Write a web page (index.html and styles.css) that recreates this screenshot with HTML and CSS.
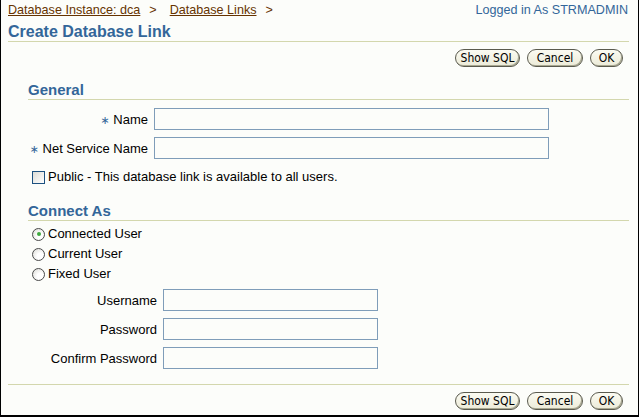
FILE: index.html
```html
<!DOCTYPE html>
<html>
<head>
<meta charset="utf-8">
<link rel="stylesheet" href="styles.css">
</head>
<body>
<div class="page">
  <div class="topbar">
    <div class="crumbs">
      <a class="crumb">Database Instance: dca</a><span class="sep">&gt;</span><a class="crumb">Database Links</a><span class="sep">&gt;</span>
    </div>
    <div class="login">Logged in As STRMADMIN</div>
  </div>
  <h1 class="title">Create Database Link</h1>
  <div class="actions">
    <button class="btn btn-sql">Show SQL</button>
    <button class="btn btn-cancel">Cancel</button>
    <button class="btn btn-ok">OK</button>
  </div>

  <div class="section">
    <h2 class="heading heading-general">General</h2>
    <div class="form form-general">
      <label class="label"><span class="req">∗</span> Name</label>
      <div class="field wide"></div>
      <label class="label"><span class="req">∗</span> Net Service Name</label>
      <div class="field wide"></div>
    </div>
    <div class="check-row">
      <span class="checkbox"></span>
      <span>Public - This database link is available to all users.</span>
    </div>

    <h2 class="heading heading-connect">Connect As</h2>
    <div class="radios">
      <div class="radio-row"><span class="radio checked"></span><span>Connected User</span></div>
      <div class="radio-row"><span class="radio"></span><span>Current User</span></div>
      <div class="radio-row"><span class="radio"></span><span>Fixed User</span></div>
    </div>
    <div class="form form-user">
      <label class="label">Username</label>
      <div class="field narrow"></div>
      <label class="label">Password</label>
      <div class="field narrow"></div>
      <label class="label">Confirm Password</label>
      <div class="field narrow"></div>
    </div>
  </div>

  <div class="footer">
    <div class="actions actions-bottom">
      <button class="btn btn-sql">Show SQL</button>
      <button class="btn btn-cancel">Cancel</button>
      <button class="btn btn-ok">OK</button>
    </div>
  </div>
</div>
</body>
</html>
```
FILE: styles.css
```css
html, body {
  margin: 0;
  padding: 0;
  background: #fcfdfa;
}
.page {
  width: 639px;
  height: 417px;
  box-sizing: border-box;
  border-left: 1px solid #000;
  border-right: 1px solid #000;
  border-bottom: 2px solid #000;
  padding: 0 9px 0 7px;
  font-family: "Liberation Sans", Arial, sans-serif;
  font-size: 13px;
  color: #000;
  background: #fcfdfa;
  overflow: hidden;
}
.topbar {
  display: flex;
  justify-content: space-between;
  padding-top: 3px;
  font-size: 12.6px;
  line-height: 15px;
  height: 15px;
}
.crumb {
  color: #663300;
  text-decoration: underline;
}
.sep {
  color: #663300;
  margin: 0 13px 0 9px;
}
.login {
  color: #336699;
  padding-right: 1px;
}
.title {
  margin: 4px 0 0 0;
  font-size: 16px;
  line-height: 19px;
  font-weight: bold;
  color: #336699;
  border-bottom: 1px solid #d3d7ad;
}
.actions {
  display: flex;
  justify-content: flex-end;
  gap: 7px;
  margin-top: 7px;
  padding-right: 6px;
}
.btn {
  height: 18px;
  box-sizing: border-box;
  border: 1px solid #5a5a4e;
  border-radius: 9px;
  background: linear-gradient(#fbfbf2, #ecebd8);
  box-shadow: inset -1px -1px 0 #a9a891;
  font-family: "DejaVu Sans Condensed", "DejaVu Sans", sans-serif;
  font-stretch: condensed;
  font-size: 12px;
  line-height: 15px;
  color: #000;
  padding: 0;
  margin: 0;
  white-space: nowrap;
  text-align: center;
}
.btn-sql { width: 65px; }
.btn-cancel { width: 56px; }
.btn-ok { width: 33px; }
.section {
  margin-left: 20px;
}
.heading {
  margin: 0;
  font-size: 15px;
  line-height: 17px;
  font-weight: bold;
  color: #336699;
  border-bottom: 1px solid #d3d7ad;
  padding-bottom: 1px;
}
.heading-general { margin-top: 14px; }
.heading-connect { margin-top: 17px; }
.form {
  display: grid;
  column-gap: 6px;
  row-gap: 7px;
  align-items: center;
}
.form-general {
  grid-template-columns: 120px 395px;
  margin-top: 8px;
}
.form-user {
  grid-template-columns: 129px 215px;
  margin-top: 5px;
}
.label {
  text-align: right;
  line-height: 16px;
  padding-top: 2px;
}
.req {
  color: #336699;
  font-family: "DejaVu Sans", sans-serif;
  font-size: 11px;
}
.field {
  height: 22px;
  box-sizing: border-box;
  border: 1px solid #7f9db9;
  background: #fcfdfa;
}
.check-row {
  display: flex;
  align-items: center;
  gap: 3px;
  margin-top: 10px;
  padding-left: 4px;
  line-height: 16px;
}
.checkbox {
  width: 13px;
  height: 13px;
  box-sizing: border-box;
  border: 1px solid #1c5180;
  background: linear-gradient(135deg, #dcdcd6, #ffffff);
}
.radios {
  margin-top: 3px;
  padding-left: 4px;
}
.radio-row {
  display: flex;
  align-items: center;
  gap: 3px;
  height: 20px;
  line-height: 20px;
}
.radio {
  width: 13px;
  height: 13px;
  box-sizing: border-box;
  border: 1px solid #4a4a4a;
  border-radius: 50%;
  background: radial-gradient(circle at 65% 65%, #ffffff 30%, #d8d8d2 100%);
  position: relative;
}
.radio.checked::after {
  content: "";
  position: absolute;
  left: 3.5px;
  top: 3.5px;
  width: 4px;
  height: 4px;
  border-radius: 50%;
  background: #3fa83f;
}
.footer {
  margin-top: 15px;
  border-top: 1px solid #d3d7ad;
}
.actions-bottom {
  margin-top: 7px;
}
```
